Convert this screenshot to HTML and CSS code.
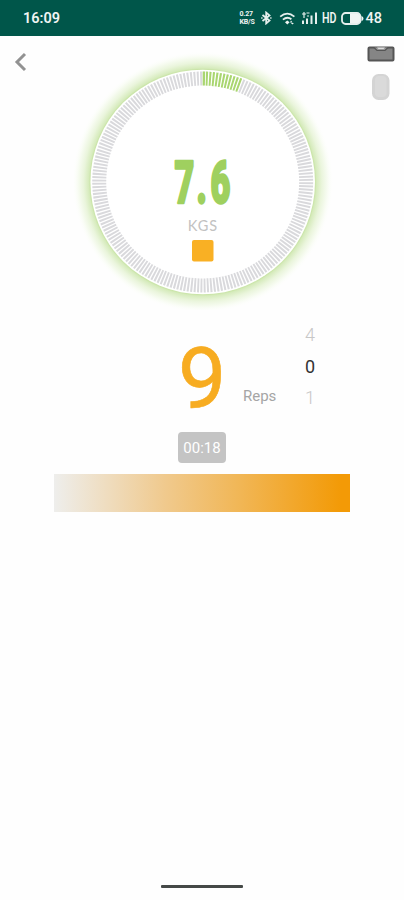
FILE: index.html
```html
<!DOCTYPE html>
<html lang="en">
<head>
<meta charset="utf-8">
<meta name="viewport" content="width=device-width, initial-scale=1">
<title>Workout</title>
<link rel="stylesheet" href="styles.css">
</head>
<body>
<header class="status">
  <span class="clock">16:09</span>
  <div class="tray">
    <span class="rate"><span>0.27</span><span>KB/S</span></span>
    <svg class="bt" width="11" height="14" viewBox="0 0 11 14"><path d="M1.5 4 8.5 9.6 5.2 12.4V1.6L8.5 4.4 1.5 10" /><path d="M.4 7h1M9.4 7h1" /></svg>
    <svg class="wifi" width="17" height="13" viewBox="0 0 17 13"><path d="M1.2 4.6Q8.3-1.4 15.4 4.6M3.9 7.6Q8.3 4 12.4 7.3" /><path class="solid" d="M8.3 8.4 10.6 10.3 8.3 12.4 6 10.3ZM12 8.5l1.6 2H11ZM13.5 12.5l-1.6-1.6h3Z" /></svg>
    <svg class="cell" width="17" height="14" viewBox="0 0 17 14"><path d="M2 13V9.500M6 13V7.500M10.500 13V4.500M15 13V1.500" /><path class="thin" d="M1 3h4M3 1v6M5.500 2h3M6 5h2" /></svg>
    <span class="hd">HD</span>
    <svg class="battery" width="23" height="13" viewBox="0 0 23 13"><rect x="1" y="1" width="18.500" height="11" rx="3.500"/><path class="solid" d="M9 2h8.500q1.500 0 1.500 1.500v6q0 1.500-1.500 1.500H9ZM20.500 4q2 .5 2 2.500t-2 2.500Z"/></svg>
    <span class="level">48</span>
  </div>
</header>
<main class="screen">
  <section class="top">
    <svg class="back" width="13" height="20" viewBox="0 0 13 20"><path d="M11 2 3 10l8 8"/></svg>
    <svg class="gauge" width="260" height="260" viewBox="0 0 260 260">
      <defs>
        <radialGradient id="glow" gradientUnits="userSpaceOnUse" cx="128.700" cy="132" r="131">
          <stop offset=".85" stop-color="#bfdf96"/>
          <stop offset=".87" stop-color="#d6ebbc"/>
          <stop offset=".91" stop-color="#eaf5dc"/>
          <stop offset=".955" stop-color="#f8fcf3"/>
          <stop offset="1" stop-color="#fff" stop-opacity="0"/>
        </radialGradient>
      </defs>
      <circle cx="128.700" cy="132" r="131" fill="url(#glow)"/>
      <circle cx="128.700" cy="132" r="112.300" fill="#fff"/>
      <g transform="rotate(-90 128.700 132)">
        <circle class="ticks" cx="128.700" cy="132" r="103.450"/>
        <circle class="gap" cx="128.700" cy="132" r="103.450"/>
        <circle class="ticks-on" cx="128.700" cy="132" r="103.450"/>
      </g>
      <text class="weight" transform="translate(100.500 152.500) scale(.58 1)"><tspan x="0">7</tspan><tspan x="38">.</tspan><tspan x="62">6</tspan></text>
      <text class="unit" x="129" y="181">KGS</text>
      <rect x="118" y="190" width="21.500" height="21.500" rx="2" fill="#f9b024"/>
    </svg>
    <div class="devices">
      <svg width="28" height="17" viewBox="0 0 28 17"><rect x="1.500" y="2.500" width="25" height="13" rx="1" fill="#858585" stroke="#555" stroke-width="2"/><path d="M7 2.500 10 5.500h8l3-3" fill="#999" stroke="#555" stroke-width="1.200"/><path d="M10 2.500h8l-1.500 1.500h-5Z" fill="#ddd"/></svg>
      <svg width="20" height="28" viewBox="0 0 20 28"><rect x="1" y="1" width="17.500" height="26" rx="6.500" fill="#d4d4d4"/><rect x="4" y="3" width="11.500" height="21" rx="4" fill="#dadada"/></svg>
    </div>
  </section>
  <section class="reps">
    <span class="count">9</span>
    <span class="label">Reps</span>
    <div class="picker"><span>4</span><span class="current">0</span><span>1</span></div>
  </section>
  <div class="timer">00:18</div>
  <div class="progress"></div>
</main>
<footer class="nav"><span class="pill"></span></footer>
</body>
</html>
```
FILE: styles.css
```css
* { box-sizing: border-box; }
body {
  margin: 0;
  width: 404px;
  height: 900px;
  display: flex;
  flex-direction: column;
  overflow: hidden;
  background: #fefefe;
  font-family: Roboto, "Liberation Sans", sans-serif;
}
.status {
  height: 36px;
  flex: none;
  display: flex;
  align-items: center;
  justify-content: space-between;
  padding: 0 22px 0 23px;
  background: #00564a;
  color: #f0f5f3;
}
.clock { font-size: 14.500px; font-weight: 600; line-height: 36px; padding-top: 1px; }
.tray { display: flex; align-items: center; height: 36px; }
.tray svg { fill: none; stroke: #e6efed; stroke-width: 1.800; }
.tray .solid { fill: #f0f5f3; stroke: none; }
.tray .thin { stroke-width: 1.200; }
.rate {
  display: flex;
  flex-direction: column;
  width: 17px;
  font-size: 7px;
  line-height: 8px;
  font-weight: 700;
  letter-spacing: -.2px;
}
.bt { margin-left: 4px; }
.wifi { margin-left: 7px; }
.cell { margin-left: 5px; }
.tray .cell { stroke-width: 2; }
.hd {
  margin-left: 4px;
  width: 15px;
  font-size: 14px;
  font-weight: 600;
  transform: scaleX(.76);
  transform-origin: left;
}
.battery { margin-left: 4px; }
.level { margin-left: 2px; font-size: 14.500px; font-weight: 500; }
.screen { flex: 1; display: flex; flex-direction: column; align-items: center; }
.top {
  width: 404px;
  height: 276px;
  display: flex;
  align-items: flex-start;
}
.back { margin: 16px 0 0 14px; fill: none; stroke: #929292; stroke-width: 3; }
.gauge { margin: 14px 0 0 47px; }
.ticks, .gap, .ticks-on { fill: none; stroke-width: 14; }
.ticks { stroke: #d9d9dc; stroke-dasharray: 1.950 1.300; }
.gap { stroke: #fff; stroke-dasharray: 38.500 800; }
.ticks-on { stroke: #a9d670; stroke-dasharray: 2.400 .850 2 1.250 2 1.250 2 1.250 2 1.250 2 1.250 2 1.250 2 1.250 2 1.250 2 1.250 2 1.250 2 800; }
.weight { font-size: 59px; font-weight: 900; fill: #9fd05f; stroke: #9fd05f; stroke-width: 2.600; stroke-linejoin: round; }
.unit { font-family: Lato, sans-serif; font-size: 14.500px; letter-spacing: 1px; text-anchor: middle; fill: #c2c2c2; }
.devices { margin: 9px 0 0 33px; display: flex; flex-direction: column; gap: 11px; align-items: center; }
.reps {
  width: 404px;
  height: 120px;
  padding-left: 178px;
  display: flex;
  align-items: flex-start;
}
.count { width: 48px; margin-top: 16px; font-size: 86px; line-height: 101px; color: #f7ac21; -webkit-text-stroke: .6px #f7ac21; }
.label { margin: 74px 0 0 17px; width: 40px; font-size: 15px; line-height: 20px; color: #a5a5a5; }
.picker { margin: 11px 0 0 22px; display: flex; flex-direction: column; gap: 7px; font-size: 18px; line-height: 24.500px; font-weight: 300; color: #c7c7c7; }
.picker .current { color: #333; font-weight: 400; }
.timer {
  width: 48px;
  height: 31px;
  border-radius: 4px;
  background: #c4c4c4;
  color: #fff;
  font-size: 15px;
  line-height: 32px;
  text-align: center;
}
.progress {
  margin: 11px 0 0;
  width: 296px;
  height: 38px;
  background: linear-gradient(90deg, #eeeeec 0%, #f0c98c 38%, #f1b655 63%, #f39a06 97%);
}
.nav { flex: none; height: 17px; display: flex; justify-content: center; }
.pill { width: 82px; height: 3px; margin-top: 2px; border-radius: 1px; background: #454947; }
```
